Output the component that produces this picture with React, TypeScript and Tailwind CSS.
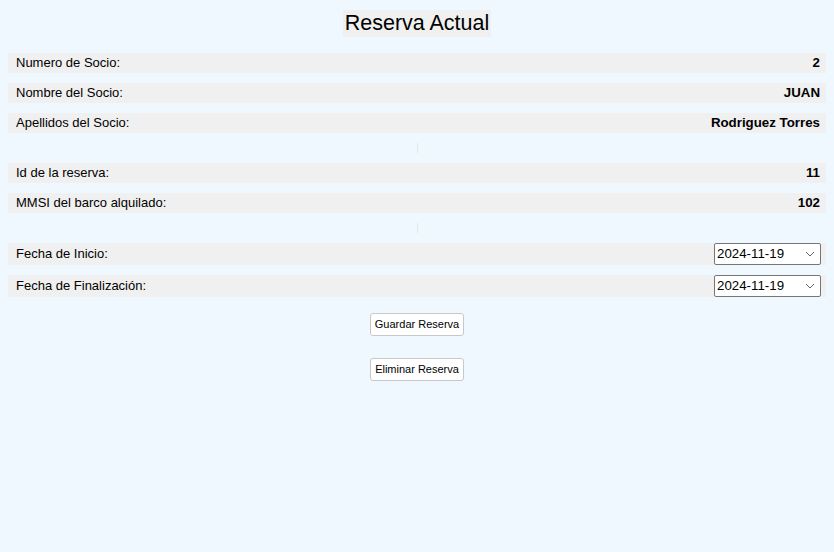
import React from 'react';

const font = { fontFamily: '"Liberation Sans", Arial, sans-serif' };

function InfoRow({ label, value }: { label: string; value: string }) {
  return (
    <div className="flex h-[20px] items-center justify-between bg-[#f0f0f0] pl-[8px] pr-[6px] text-[13px] text-black">
      <span>{label}</span>
      <span className="text-[13.3px] font-bold">{value}</span>
    </div>
  );
}

function DateRow({ label, value }: { label: string; value: string }) {
  return (
    <div className="flex h-[22px] items-center justify-between bg-[#f0f0f0] pl-[8px] pr-[5px] text-[13px] text-black">
      <span>{label}</span>
      <div className="flex h-[22px] w-[107px] items-center justify-between rounded-[2px] border border-[#767676] bg-white pl-[2px] pr-[5px] text-[13.3px]">
        <span>{value}</span>
        <svg width="10" height="6" viewBox="0 0 10 6" fill="none" stroke="#6b6b6b" strokeWidth="1">
          <path d="M1 1l4 4 4-4" />
        </svg>
      </div>
    </div>
  );
}

function Spacer() {
  return (
    <div className="flex h-[10px] justify-center">
      <div className="h-full w-px bg-[#e6e6e6]" />
    </div>
  );
}

export default function App() {
  const fechaInicio = '2024-11-19';
  const fechaFin = '2024-11-19';

  return (
    <div className="min-h-[552px] bg-[#f0f8ff] px-[8px] pt-[10px]" style={font}>
      <div className="flex justify-center">
        <h1 className="bg-[#f0f0f0] px-[2px] text-[21.5px] leading-[27px] text-black">Reserva Actual</h1>
      </div>

      <div className="mt-[16px] flex flex-col gap-[10px]">
        <InfoRow label="Numero de Socio:" value="2" />
        <InfoRow label="Nombre del Socio:" value="JUAN" />
        <InfoRow label="Apellidos del Socio:" value="Rodriguez Torres" />
        <Spacer />
        <InfoRow label="Id de la reserva:" value="11" />
        <InfoRow label="MMSI del barco alquilado:" value="102" />
        <Spacer />
        <DateRow label="Fecha de Inicio:" value={fechaInicio} />
        <DateRow label="Fecha de Finalización:" value={fechaFin} />
      </div>

      <div className="mt-[16px] flex flex-col items-center gap-[22px]">
        <button className="h-[23px] rounded-[3px] border border-[#c8c8c8] bg-white px-[4px] text-[11px] text-black">
          Guardar Reserva
        </button>
        <button className="h-[23px] rounded-[3px] border border-[#c8c8c8] bg-white px-[4px] text-[11px] text-black">
          Eliminar Reserva
        </button>
      </div>
    </div>
  );
}
